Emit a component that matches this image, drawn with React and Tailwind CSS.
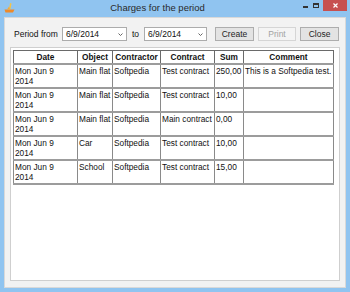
import React from 'react';

const rows = [
  { date: 'Mon Jun 9 2014', object: 'Main flat', contractor: 'Softpedia', contract: 'Test contract', sum: '250,00', comment: 'This is a Softpedia test.' },
  { date: 'Mon Jun 9 2014', object: 'Main flat', contractor: 'Softpedia', contract: 'Test contract', sum: '10,00', comment: '' },
  { date: 'Mon Jun 9 2014', object: 'Main flat', contractor: 'Softpedia', contract: 'Main contract', sum: '0,00', comment: '' },
  { date: 'Mon Jun 9 2014', object: 'Car', contractor: 'Softpedia', contract: 'Test contract', sum: '10,00', comment: '' },
  { date: 'Mon Jun 9 2014', object: 'School', contractor: 'Softpedia', contract: 'Test contract', sum: '15,00', comment: '' },
];

const AppIcon = () => (
  <svg width="11" height="10" viewBox="0 0 11 10">
    <path d="M6 0 L7.5 0.5 L6.5 6 L5 6 Z" fill="#f6c445" />
    <path d="M0.5 6.5 L10.5 6.5 L9 9.5 L1.5 9.5 Z" fill="#ee8a2a" />
    <path d="M3 6.5 L5 3.5 L6 6.5 Z" fill="#f4a93a" />
  </svg>
);

const Combo = ({ value, width }) => (
  <div className={`${width} h-[14px] bg-white border border-[#acacac] flex items-center pl-[3px] pr-[3px] justify-between`}>
    <span>{value}</span>
    <svg width="5" height="3" viewBox="0 0 5 3">
      <path d="M0.5 0.5 L2.5 2.5 L4.5 0.5" stroke="#555" strokeWidth="0.9" fill="none" />
    </svg>
  </div>
);

const Button = ({ children, width, disabled }) => (
  <div
    className={`${width} h-[14px] flex items-center justify-center border ${
      disabled ? 'bg-[#f4f4f4] border-[#d5d5d5] text-[#a3a3a3]' : 'bg-[#e3e3e3] border-[#adadad] text-[#1e1e1e]'
    }`}
  >
    {children}
  </div>
);

export default function App() {
  return (
    <div className="w-[350px] h-[292px] bg-[#90c4f0] flex flex-col font-['Liberation_Sans',Arial,sans-serif] text-[8.5px] leading-[10px] text-[#111] overflow-hidden">
      {/* title bar */}
      <div className="h-[17px] flex items-start relative shrink-0">
        <div className="ml-[4px] mt-[3px]">
          <AppIcon />
        </div>
        <div className="flex-1 text-center mt-[3px] text-[9.5px] text-[#2a2a2a]">Charges for the period</div>
        <div className="flex items-start">
          <div className="w-[10px] h-[11px] flex items-center justify-center">
            <div className="w-[5px] h-[1.5px] bg-[#333] mt-[3px]" />
          </div>
          <div className="w-[12px] h-[11px] flex items-center justify-center">
            <div className="w-[6px] h-[5px] border border-[#333] border-t-2" />
          </div>
          <div className="w-[24px] h-[11px] bg-[#c75050] flex items-center justify-center ml-[1px] mr-[3px]">
            <svg width="5" height="5" viewBox="0 0 5 5">
              <path d="M0.5 0.5 L4.5 4.5 M4.5 0.5 L0.5 4.5" stroke="#fff" strokeWidth="1.2" />
            </svg>
          </div>
        </div>
      </div>

      {/* client area */}
      <div className="flex-1 mx-[4px] mb-[4px] bg-[#f2f2f2] border border-[#d9d9d9] flex flex-col">
        <div className="flex items-center pt-[9px] pl-[9px] h-[23px]">
          <span className="w-[48px]">Period from</span>
          <Combo value="6/9/2014" width="w-[65px]" />
          <span className="ml-[5px] w-[12px]">to</span>
          <Combo value="6/9/2014" width="w-[63px]" />
          <div className="ml-[8px]">
            <Button width="w-[39px]">Create</Button>
          </div>
          <div className="ml-[4px]">
            <Button width="w-[38px]" disabled>Print</Button>
          </div>
          <div className="ml-[4px]">
            <Button width="w-[39px]">Close</Button>
          </div>
        </div>

        <div className="flex-1 mt-[6px] mx-[5px] mb-[6px] bg-white border border-[#cfcfcf] pt-[2px] pl-[2px]">
          <table className="table-fixed border-collapse w-[321px] border border-[#555] text-[8.3px]">
            <colgroup>
              <col className="w-[64px]" />
              <col className="w-[35px]" />
              <col className="w-[48px]" />
              <col className="w-[54px]" />
              <col className="w-[29px]" />
              <col className="w-[90px]" />
            </colgroup>
            <thead>
              <tr className="h-[13px]">
                {['Date', 'Object', 'Contractor', 'Contract', 'Sum', 'Comment'].map((h) => (
                  <th key={h} className="border border-[#6a6a6a] font-bold text-center p-0 align-middle">
                    {h}
                  </th>
                ))}
              </tr>
            </thead>
            <tbody>
              {rows.map((r, i) => (
                <tr key={i} className="h-[24px]">
                  {[r.date, r.object, r.contractor, r.contract, r.sum, r.comment].map((c, j) => (
                    <td
                      key={j}
                      className="border-x border-x-[#8a8a8a] border-y-2 border-y-[#9c9c9c] align-top pt-[1px] pl-[1px] pr-0 pb-0 whitespace-normal"
                    >
                      {j === 0 ? (
                        <>
                          Mon Jun 9
                          <br />
                          2014
                        </>
                      ) : (
                        <span className="whitespace-nowrap">{c}</span>
                      )}
                    </td>
                  ))}
                </tr>
              ))}
            </tbody>
          </table>
        </div>
      </div>
    </div>
  );
}
